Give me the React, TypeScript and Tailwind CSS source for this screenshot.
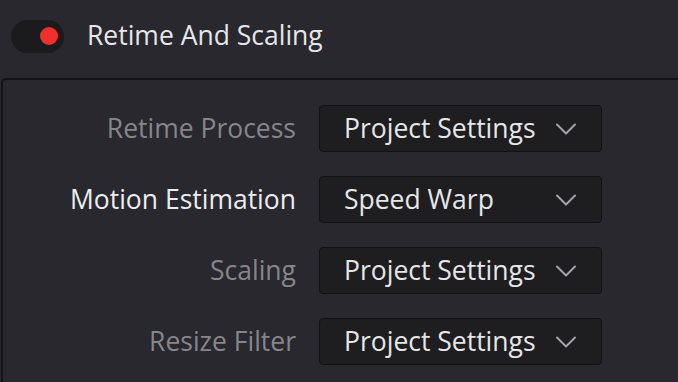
import React from "react";

const rows = [
  { label: "Retime Process", value: "Project Settings", active: false },
  { label: "Motion Estimation", value: "Speed Warp", active: true },
  { label: "Scaling", value: "Project Settings", active: false },
  { label: "Resize Filter", value: "Project Settings", active: false },
];

function Chevron() {
  return (
    <svg width="22" height="14" viewBox="0 0 22 14" fill="none">
      <path d="M2 2.5 L11 11.5 L20 2.5" stroke="#a4a4a8" strokeWidth="2" strokeLinecap="round" strokeLinejoin="round" />
    </svg>
  );
}

export default function App() {
  return (
    <div
      className="w-[678px] h-[382px] bg-[#28282e] overflow-hidden flex flex-col"
      style={{ fontFamily: '"Open Sans", "Noto Sans", sans-serif' }}
    >
      <div className="h-[78px] flex items-center pl-[11px] shrink-0">
        <div className="w-[53px] h-[33px] rounded-full bg-[#1b1b1d] flex items-center justify-end pr-[6px] -mt-[6px]">
          <div className="w-[18px] h-[18px] rounded-full bg-[#f2302b]" />
        </div>
        <span className="ml-[23px] text-[26.5px] text-[#e6e6e8] -mt-[6px]">Retime And Scaling</span>
      </div>
      <div className="flex-1 ml-[1px] border-t-2 border-l-2 border-[#141416] rounded-tl-[5px] pt-[25px] flex flex-col gap-[24px]">
        {rows.map((r) => (
          <div key={r.label} className="flex items-center h-[47px]">
            <div
              className={`w-[293px] text-right text-[26.5px] whitespace-nowrap pt-[1px] ${r.active ? "text-[#ececee]" : "text-[#86868a]"}`}
            >
              {r.label}
            </div>
            <div className="ml-[23px] w-[283px] h-[47px] rounded-[4px] bg-[#1e1e20] border border-[#121214] flex items-center pl-[24px] pr-[24px]">
              <span className="flex-1 text-[26.5px] text-[#e6e6e8] whitespace-nowrap pt-[1px]">{r.value}</span>
              <Chevron />
            </div>
          </div>
        ))}
      </div>
    </div>
  );
}
